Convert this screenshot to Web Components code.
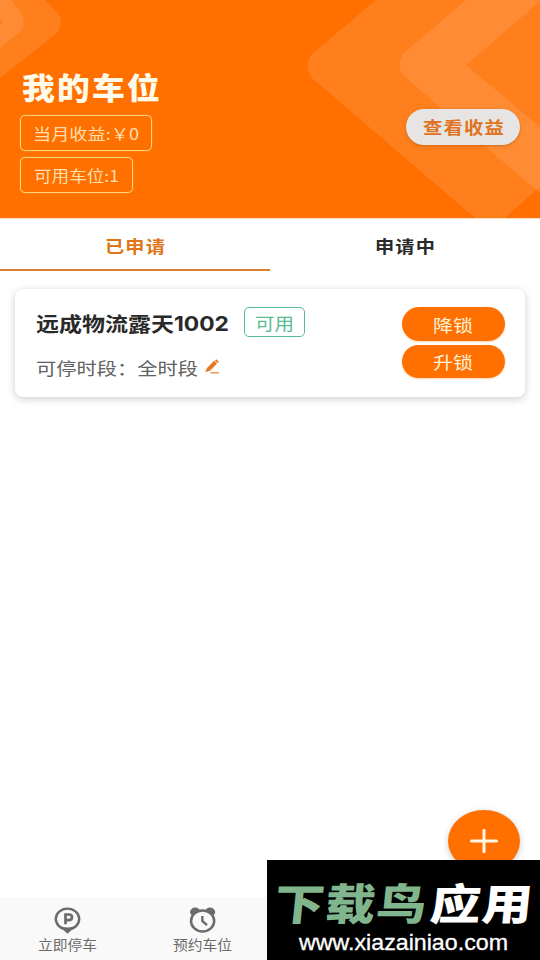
<!DOCTYPE html>
<html lang="zh-CN">
<head>
<meta charset="utf-8">
<title>我的车位</title>
<style>
html,body{margin:0;height:100%;background:#fff;overflow:hidden}
body{font-family:"Noto Sans CJK SC",sans-serif}
</style>
</head>
<body>
<parking-page></parking-page>
<script>
function define(name, html, ready) {
  const t = document.createElement('template');
  t.innerHTML = html;
  customElements.define(name, class extends HTMLElement {
    constructor() {
      super();
      this.attachShadow({mode: 'open'}).appendChild(t.content.cloneNode(true));
    }
    connectedCallback() { if (ready) ready(this, this.shadowRoot); }
  });
}

/* One line of text, stretched horizontally to the width given in "w". */
define('wide-text', `
<style>
:host{display:block;flex:none;white-space:nowrap;line-height:1}
span{display:inline-block;transform-origin:0 50%;line-height:1;vertical-align:top}
</style><span><slot></slot></span>`, (el, root) => {
  const span = root.querySelector('span');
  const w = Number(el.getAttribute('w'));
  el.style.fontSize = el.getAttribute('size') + 'px';
  el.style.width = w + 'px';
  const skew = el.hasAttribute('skew') ? ' skewX(-' + el.getAttribute('skew') + 'deg)' : '';
  span.style.transform = 'scaleX(' + w / span.getBoundingClientRect().width + ')' + skew;
});

define('outline-tag', `
<style>
:host{display:flex;align-items:center;justify-content:center;box-sizing:border-box;border:1px solid currentColor;border-radius:5px;flex:none}
</style><slot></slot>`);

define('pill-button', `
<style>
:host{display:flex;align-items:center;justify-content:center;box-sizing:border-box;border-radius:18px;flex:none;
background:var(--pill-bg,#ff7000);color:var(--pill-fg,#fff0d8);box-shadow:var(--pill-shadow,0 1px 2px #ffb36e88)}
</style><slot></slot>`);

define('page-header', `
<style>
:host{display:grid;grid-template:218px/540px;overflow:hidden;background:#ff7000;border-bottom:1px solid #ffe2bc;height:218px}
svg,.content{grid-area:1/1}
.content{display:flex;justify-content:space-between;padding:72px 20px 0;box-sizing:border-box;z-index:1}
.left{display:flex;flex-direction:column;align-items:flex-start}
.title{color:#fffbea;font-weight:900;margin:0 0 13px 2px;letter-spacing:2px}
outline-tag{color:#ffd579;box-shadow:0 0 1px #ffd579;height:36px;margin-bottom:6px}
outline-tag wide-text{color:#ffdfac;margin:2px 0 0 -1px}
pill-button{width:114px;height:36px;margin-top:37px;--pill-bg:#e6e5e3;--pill-fg:#e07220;--pill-shadow:0 1px 3px #a3540088;font-weight:700}
pill-button wide-text{margin:1px 0 0 1px;letter-spacing:1px}
</style>
<svg width="540" height="218" viewBox="0 0 540 218">
<path d="M376 0 312 54Q303 65 312 78L475 218H505L536 190 540 193V0Z" fill="#ff7f1d"/>
<path d="M466 0 404 53Q395 65 404 76L536 190 540 187V127L466 65 540 1V0Z" fill="#ff8c34"/>
<path d="M45 0 57 12Q65 22 57 33L0 78V0Z" fill="#ff7f1d"/>
<path d="M11 0 21 13Q27 24 20 32L0 48V0Z" fill="#ff8c34"/>
<path d="M0 18 3 22 0 25Z" fill="#ff7f1d"/>
</svg>
<div class="content">
<div class="left">
<wide-text class="title" size="29.5" w="140">我的车位</wide-text>
<outline-tag style="width:132px"><wide-text size="15.5" w="106">当月收益:￥0</wide-text></outline-tag>
<outline-tag style="width:113px"><wide-text size="15.5" w="85">可用车位:1</wide-text></outline-tag>
</div>
<pill-button><wide-text size="16.5" w="82">查看收益</wide-text></pill-button>
</div>`);

define('tab-bar', `
<style>
:host{display:grid;grid-template-columns:1fr 1fr;height:53px}
div{display:flex;justify-content:center;padding-top:19px;font-weight:700;color:#2a2a2a;border-bottom:2px solid transparent;box-sizing:border-box;height:52px;letter-spacing:1px}
.on{color:#df7419;border-color:#d9812f}
</style>
<div class="on"><wide-text size="16.5" w="61">已申请</wide-text></div>
<div><wide-text size="16.5" w="61">申请中</wide-text></div>`);

define('space-card', `
<style>
:host{display:flex;justify-content:space-between;box-sizing:border-box;height:108px;margin:17px 15px 0;padding:18px 20px 0 21px;border-radius:8px;background:#fff;box-shadow:0 2px 8px #0003}
.row{display:flex;align-items:center}
.name{font-weight:700;color:#292929;padding-top:3px}
.name wide-text:last-child{font-family:Inter,sans-serif}
outline-tag{width:61px;height:30px;margin-left:15px;color:#55bd90}
outline-tag wide-text{margin-top:1px}
.time{margin-top:18px;color:#626262;height:24px}
.time wide-text{margin-top:1px}
.time svg{margin-left:7px}
.buttons{display:flex;flex-direction:column;gap:4px}
pill-button{width:103px;height:34px}
pill-button wide-text{margin:1px 0 0 -1px}
pill-button+pill-button{height:33px}
</style>
<div>
<div class="row"><div class="row name"><wide-text size="20" w="138">远成物流露天</wide-text><wide-text size="20" w="55">1002</wide-text></div>
<outline-tag><wide-text size="17.5" w="39">可用</wide-text></outline-tag></div>
<div class="row time"><wide-text size="17.5" w="162">可停时段：全时段</wide-text>
<svg width="15" height="16" viewBox="0 0 15 16"><path d="M.2 13.2 2 9 9 1.8 12.2 4.6 5 11.8Z" fill="#e27a22"/><path d="M9.7 1.4 11.2.2 14 2.7 12.7 4.1Z" fill="#e27a22"/><path d="M5.5 13.8H14" stroke="#ec9a55" stroke-width="1.5"/></svg></div>
</div>
<div class="buttons">
<pill-button><wide-text size="17.5" w="40">降锁</wide-text></pill-button>
<pill-button><wide-text size="17.5" w="40">升锁</wide-text></pill-button>
</div>`);

define('nav-bar', `
<style>
:host{display:grid;grid-template-columns:repeat(4,135px);height:63px;background:#f9f9f9;color:#6b6b6b}
div{display:flex;flex-direction:column;align-items:center;padding-top:10px}
wide-text{margin-top:4px}
</style>
<div><svg width="28" height="27" viewBox="0 0 28 27"><ellipse cx="13.5" cy="12" rx="11.7" ry="10.4" fill="none" stroke="#6b6b6b" stroke-width="2.4"/><path d="M4.5 18.6Q13.5 22.6 22.5 18.6L13.5 26.8Z" fill="#6b6b6b"/><path d="M11.5 17.2V7.5H14.8Q18 7.5 18 10.3T14.8 13.1H11.5" fill="none" stroke="#6b6b6b" stroke-width="2.7"/></svg>
<wide-text size="13.5" w="59">立即停车</wide-text></div>
<div><svg width="28" height="27" viewBox="0 0 28 27"><ellipse cx="6.2" cy="5" rx="5.2" ry="4.4" fill="#6b6b6b"/><ellipse cx="21" cy="5" rx="5.2" ry="4.4" fill="#6b6b6b"/><ellipse cx="13.6" cy="14" rx="11.6" ry="10.4" fill="#f9f9f9" stroke="#6b6b6b" stroke-width="2.5"/><path d="M13.3 9V14L18 18.2" fill="none" stroke="#6b6b6b" stroke-width="2.4"/></svg>
<wide-text size="13.5" w="59">预约车位</wide-text></div>`);

define('add-button', `
<style>
:host{position:absolute;left:448px;top:810px;width:72px;height:62px;border-radius:50%;background:#ff7000;display:grid;place-items:center;box-shadow:0 2px 7px #0003}
</style>
<svg width="28" height="24" viewBox="0 0 28 24"><path d="M1.5 12H26.5M14 1.3V22.7" stroke="#fff6e4" stroke-width="3" stroke-linecap="round"/></svg>`);

define('site-banner', `
<style>
:host{position:absolute;left:267px;top:860px;width:273px;height:100px;background:#000;display:flex;flex-direction:column;box-sizing:border-box;padding:20px 0 0 8px}
.name{display:flex;gap:3px;font-weight:900;color:#80b58d}
.name wide-text{letter-spacing:1px}
.name wide-text:last-child{color:#fff}
.url{font-family:"Liberation Sans",sans-serif;color:#fff;margin:9px 0 0 24px;-webkit-text-stroke:.3px #fff}
</style>
<div class="name"><wide-text size="43" w="153" skew="5">下载鸟</wide-text><wide-text size="43" w="103" skew="5">应用</wide-text></div>
<wide-text class="url" size="22" w="209">www.xiazainiao.com</wide-text>`);

define('parking-page', `
<style>
:host{display:flex;flex-direction:column;position:relative;width:540px;height:960px;background:#fff;overflow:hidden}
nav-bar{margin-top:auto}
</style>
<page-header></page-header><tab-bar></tab-bar><space-card></space-card><nav-bar></nav-bar>
<add-button></add-button><site-banner></site-banner>`);
</script>
</body>
</html>
